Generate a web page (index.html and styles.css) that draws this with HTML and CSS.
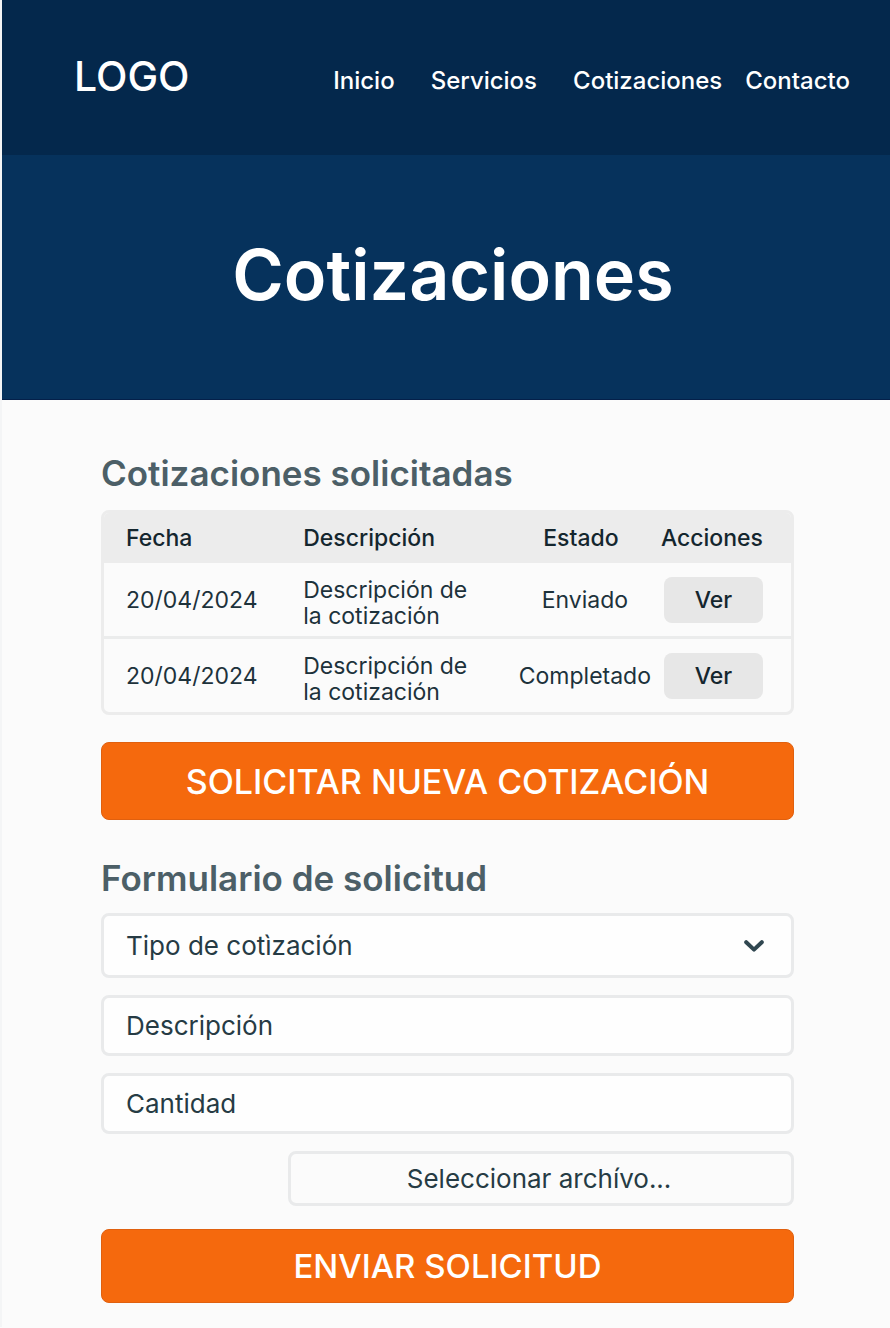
FILE: index.html
```html
<!DOCTYPE html>
<html lang="es">
<head>
<meta charset="utf-8">
<meta name="viewport" content="width=device-width, initial-scale=1">
<title>Cotizaciones</title>
<link rel="stylesheet" href="styles.css">
</head>
<body>
<header class="topbar">
  <a class="logo" href="#">LOGO</a>
  <nav class="nav">
    <a class="nav-link" href="#">Inicio</a>
    <a class="nav-link" href="#">Servicios</a>
    <a class="nav-link" href="#">Cotizaciones</a>
    <a class="nav-link nav-link-last" href="#">Contacto</a>
  </nav>
</header>
<section class="hero">
  <h1 class="hero-title">Cotizaciones</h1>
</section>
<main class="content">
  <h2 class="section-title">Cotizaciones solicitadas</h2>
  <div class="table-frame">
    <table class="quotes">
      <thead>
        <tr>
          <th class="col-date" scope="col">Fecha</th>
          <th class="col-desc" scope="col">Descripción</th>
          <th class="col-state" scope="col">Estado</th>
          <th class="col-action" scope="col">Acciones</th>
        </tr>
      </thead>
      <tbody>
        <tr>
          <td class="col-date">20/04/2024</td>
          <td class="col-desc">Descripción de la cotización</td>
          <td class="col-state">Enviado</td>
          <td class="col-action"><button class="view-button" type="button">Ver</button></td>
        </tr>
        <tr>
          <td class="col-date">20/04/2024</td>
          <td class="col-desc">Descripción de la cotización</td>
          <td class="col-state">Completado</td>
          <td class="col-action"><button class="view-button" type="button">Ver</button></td>
        </tr>
      </tbody>
    </table>
  </div>
  <button class="primary primary-new" type="button">SOLICITAR NUEVA COTIZACIÓN</button>
  <h2 class="section-title form-title">Formulario de solicitud</h2>
  <form class="form">
    <div class="select-wrap">
      <select class="field field-select" aria-label="Tipo de cotización">
        <option>Tipo de cotìzación</option>
      </select>
      <svg class="chevron" viewBox="0 0 20 12" aria-hidden="true"><path d="M2.200 2.200 L10 9.600 L17.800 2.200"/></svg>
    </div>
    <input class="field" type="text" placeholder="Descripción" aria-label="Descripción">
    <input class="field" type="text" placeholder="Cantidad" aria-label="Cantidad">
    <button class="file-button" type="button">Seleccionar archívo...</button>
    <button class="primary primary-send" type="submit">ENVIAR SOLICITUD</button>
  </form>
</main>
</body>
</html>
```
FILE: styles.css
```css
* { box-sizing: border-box; }

body {
  margin: 0;
  border-left: 2px solid #f4f5f6;
  background: #fbfbfb;
  color: #1d323b;
  font-family: Inter, "Liberation Sans", sans-serif;
}

button, input, select { font: inherit; color: inherit; }

.topbar {
  display: flex;
  align-items: center;
  justify-content: space-between;
  height: 155px;
  padding: 6px 40px 0 72px;
  background: #04284c;
}

.logo {
  padding-bottom: 9px;
  color: #fff;
  font-size: 41px;
  font-weight: 500;
  text-decoration: none;
}

.nav { display: flex; gap: 36px; }

.nav-link {
  color: #fff;
  font-size: 24px;
  font-weight: 500;
  text-decoration: none;
}

.nav-link-last { margin-left: -13px; }

.hero {
  display: flex;
  align-items: center;
  justify-content: center;
  height: 245px;
  padding: 0 0 5px 14px;
  background: #06325c;
  border-bottom: 1px solid #04204a;
}

.hero-title {
  margin: 0;
  color: #fff;
  font-size: 70px;
  font-weight: 600;
  line-height: 80px;
}

.content { padding: 52px 96px 24px 99px; }

.section-title {
  margin: 0 0 16px;
  color: #4c5f67;
  font-size: 35px;
  font-weight: 600;
  line-height: 42px;
}

.form-title { margin-bottom: 14px; }

.table-frame {
  overflow: hidden;
  border: 3px solid #ececec;
  border-radius: 8px;
}

.quotes {
  width: 100%;
  table-layout: fixed;
  border-spacing: 0;
  font-size: 23px;
  line-height: 26px;
}

.quotes th {
  height: 50px;
  padding: 0;
  background: #ececec;
  color: #14262e;
  font-weight: 500;
  text-align: left;
}

.quotes td { height: 73px; padding: 0; }

.quotes tbody tr + tr td { height: 76px; border-top: 3px solid #ebecec; }

.quotes .col-date { width: 29%; padding-left: 22px; }
.quotes .col-desc { width: 30%; }
.quotes td.col-desc { padding: 14px 36px 7px 0; }
.quotes .col-state { width: 22%; text-align: center; }
.quotes th.col-state { padding-right: 8px; }
.quotes .col-action { width: 19%; padding-right: 28px; text-align: right; }

.view-button {
  width: 99px;
  height: 46px;
  padding: 0;
  border: 0;
  border-radius: 8px;
  background: #e7e7e7;
  color: #14262e;
  font-weight: 500;
  vertical-align: middle;
}

.primary {
  display: block;
  width: 100%;
  padding: 0;
  border: 1px solid #e0600f;
  border-radius: 8px;
  background: #f5690d;
  color: #fff;
  font-size: 34px;
  font-weight: 500;
}

.primary-new { height: 78px; margin: 27px 0 37px; }
.primary-send { height: 74px; margin-top: 6px; font-size: 33px; }

.form { display: flex; flex-direction: column; gap: 17px; }

.field {
  width: 100%;
  height: 61px;
  padding: 0 22px;
  border: 3px solid #e9eaeb;
  border-radius: 8px;
  background: #fefefe;
  color: #263b44;
  font-size: 26px;
}

.field::placeholder { color: #263b44; opacity: 1; }

.select-wrap { display: grid; align-items: center; }

.field-select { grid-area: 1 / 1; height: 65px; appearance: none; }

.chevron {
  grid-area: 1 / 1;
  justify-self: end;
  width: 20px;
  height: 12px;
  margin-right: 30px;
  fill: none;
  stroke: #304750;
  stroke-width: 4;
  stroke-linecap: round;
  stroke-linejoin: round;
  pointer-events: none;
}

.file-button {
  align-self: flex-end;
  width: 73%;
  height: 55px;
  padding: 0 4px 0 0;
  border: 3px solid #e9eaeb;
  border-radius: 8px;
  background: #fbfbfb;
  color: #263b44;
  font-size: 26px;
}
```
